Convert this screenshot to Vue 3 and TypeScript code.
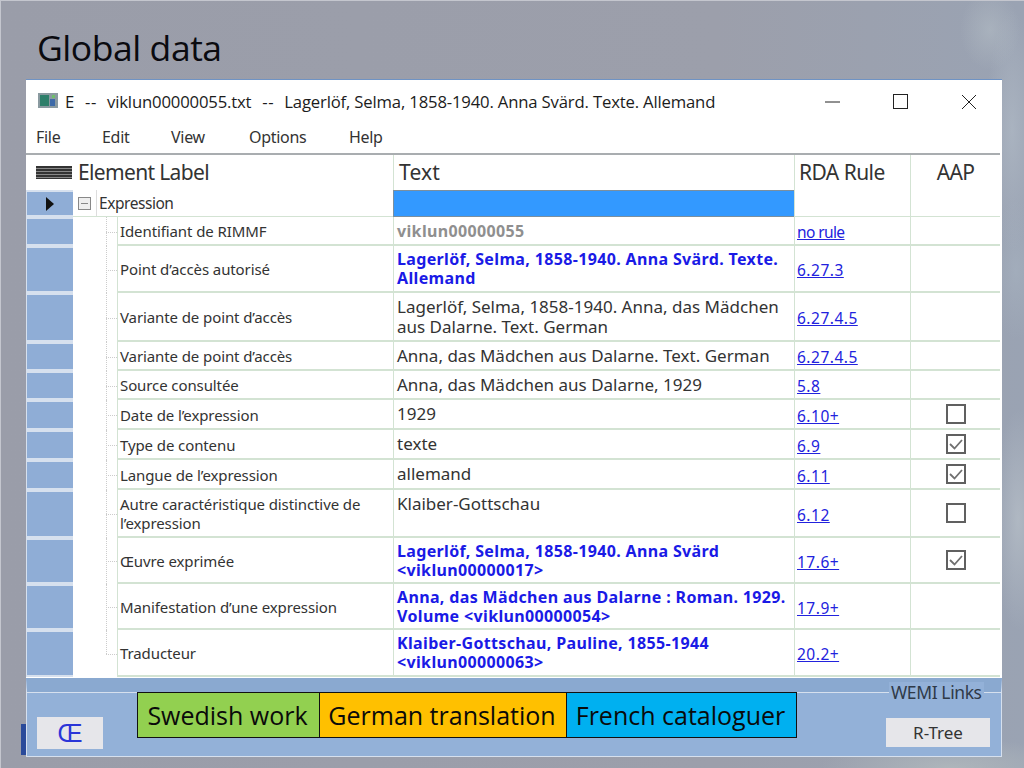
<script setup lang="ts">
interface Row {
  label: string
  text: string[]
  kind: 'plain' | 'bold' | 'id'
  rule: string
  aap: 'none' | 'off' | 'on'
  h: number
}
const rows: Row[] = [
  { label: 'Identifiant de RIMMF', text: ['viklun00000055'], kind: 'id', rule: 'no rule', aap: 'none', h: 29 },
  { label: 'Point d’accès autorisé', text: ['Lagerlöf, Selma, 1858-1940. Anna Svärd. Texte.', 'Allemand'], kind: 'bold', rule: '6.27.3', aap: 'none', h: 47 },
  { label: 'Variante de point d’accès', text: ['Lagerlöf, Selma, 1858-1940. Anna, das Mädchen', 'aus Dalarne. Text. German'], kind: 'plain', rule: '6.27.4.5', aap: 'none', h: 49 },
  { label: 'Variante de point d’accès', text: ['Anna, das Mädchen aus Dalarne. Text. German'], kind: 'plain', rule: '6.27.4.5', aap: 'none', h: 29 },
  { label: 'Source consultée', text: ['Anna, das Mädchen aus Dalarne, 1929'], kind: 'plain', rule: '5.8', aap: 'none', h: 29 },
  { label: 'Date de l’expression', text: ['1929'], kind: 'plain', rule: '6.10+', aap: 'off', h: 30 },
  { label: 'Type de contenu', text: ['texte'], kind: 'plain', rule: '6.9', aap: 'on', h: 30 },
  { label: 'Langue de l’expression', text: ['allemand'], kind: 'plain', rule: '6.11', aap: 'on', h: 30 },
  { label: 'Autre caractéristique distinctive de l’expression', text: ['Klaiber-Gottschau'], kind: 'plain', rule: '6.12', aap: 'off', h: 48 },
  { label: 'Œuvre exprimée', text: ['Lagerlöf, Selma, 1858-1940. Anna Svärd', '<viklun00000017>'], kind: 'bold', rule: '17.6+', aap: 'on', h: 46 },
  { label: 'Manifestation d’une expression', text: ['Anna, das Mädchen aus Dalarne : Roman. 1929.', 'Volume <viklun00000054>'], kind: 'bold', rule: '17.9+', aap: 'none', h: 46 },
  { label: 'Traducteur', text: ['Klaiber-Gottschau, Pauline, 1855-1944', '<viklun00000063>'], kind: 'bold', rule: '20.2+', aap: 'none', h: 47 },
]
const menus = ['File', 'Edit', 'View', 'Options', 'Help']
const legend = [
  { t: 'Swedish work', c: 'green' },
  { t: 'German translation', c: 'amber' },
  { t: 'French cataloguer', c: 'cyan' },
]
</script>

<template>
  <div class="slide">
    <h1 class="title">Global data</h1>
    <div class="window">
      <div class="titlebar">
        <svg class="appicon" width="22" height="16" viewBox="0 0 22 16">
          <rect x="0" y="0" width="20" height="15" fill="#8a9aa0" />
          <rect x="2" y="2" width="9" height="11" fill="#2d7f6a" />
          <rect x="12" y="6" width="5" height="7" fill="#3d6aa8" />
          <rect x="14" y="2" width="3" height="3" fill="#6fbf6a" />
        </svg>
        <span class="wintitle">E<span class="sep">--</span>viklun00000055.txt<span class="sep">--</span>Lagerlöf, Selma, 1858-1940. Anna Svärd. Texte. Allemand</span>
        <div class="controls">
          <svg width="16" height="16" viewBox="0 0 16 16"><path d="M0 8H15" stroke="#222" fill="none" /></svg>
          <svg width="16" height="16" viewBox="0 0 16 16"><rect x="0.5" y="0.5" width="14" height="14" stroke="#222" fill="none" /></svg>
          <svg width="16" height="16" viewBox="0 0 16 16"><path d="M1 1L15 15M15 1L1 15" stroke="#222" fill="none" /></svg>
        </div>
      </div>
      <div class="menubar">
        <span v-for="m in menus" :key="m" class="menu" :class="'m-' + m.toLowerCase()">{{ m }}</span>
      </div>
      <div class="grid">
        <div class="row head">
          <div class="handle headhandle"><span class="lines"></span></div>
          <div class="hcell labelcol">Element Label</div>
          <div class="hcell textcol">Text</div>
          <div class="hcell rulecol">RDA Rule</div>
          <div class="hcell aapcol center">AAP</div>
        </div>
        <div class="row exprow">
          <div class="handle"><span class="arrow"></span></div>
          <div class="expcell">
            <span class="minus"></span>
            <span class="explabel">Expression</span>
          </div>
          <div class="textcol selected"></div>
          <div class="rulecol"></div>
          <div class="aapcol"></div>
        </div>
        <div v-for="(r, i) in rows" :key="i" class="row" :style="{ height: r.h + 'px' }">
          <div class="handle"></div>
          <div class="tree" :class="{ last: i === rows.length - 1 }"><span class="branch"></span></div>
          <div class="labelcell">{{ r.label }}</div>
          <div class="textcol textcell" :class="r.kind">
            <div v-for="(l, j) in r.text" :key="j">{{ l }}</div>
          </div>
          <div class="rulecol rulecell"><span class="link" :class="{ word: r.rule === 'no rule' }">{{ r.rule }}</span></div>
          <div class="aapcol aapcell">
            <svg v-if="r.aap !== 'none'" class="check" width="20" height="20" viewBox="0 0 20 20">
              <rect x="1" y="1" width="18" height="18" fill="#fff" stroke="#606060" stroke-width="2" />
              <path v-if="r.aap === 'on'" d="M4 10L8.5 14.5L16 6" fill="none" stroke="#707070" stroke-width="1.8" />
            </svg>
          </div>
        </div>
      </div>
      <div class="footer">
        <button class="btn oe">Œ</button>
        <div class="legend">
          <span v-for="l in legend" :key="l.t" class="chip" :class="l.c">{{ l.t }}</span>
        </div>
        <div class="wemi">
          <span class="wemilabel">WEMI Links</span>
          <button class="btn rtree">R-Tree</button>
        </div>
      </div>
      <span class="sliver"></span>
    </div>
  </div>
</template>

<style>
html, body { margin: 0; padding: 0; }
</style>

<style scoped>
.slide {
  width: 1024px;
  height: 768px;
  overflow: hidden;
  box-sizing: border-box;
  padding-top: 1px;
  padding-left: 1px;
  box-shadow: inset 1px 1px 0 #c4c6ce;
  background:
    radial-gradient(ellipse 30px 40px at 990px 30px, rgba(190,200,205,.4), transparent),
    radial-gradient(ellipse 26px 120px at 1012px 130px, rgba(185,195,205,.5), transparent),
    radial-gradient(ellipse 24px 70px at 1016px 270px, rgba(170,182,195,.5), transparent),
    radial-gradient(ellipse 24px 110px at 1018px 520px, rgba(190,198,205,.6), transparent),
    radial-gradient(ellipse 130px 30px at 950px 768px, rgba(180,188,190,.75), transparent),
    linear-gradient(90deg, #9a9da9 0%, #9c9fab 70%, #9aa3b3 100%);
  font-family: "Open Sans", "Liberation Sans", sans-serif;
}
.title {
  margin: 0;
  height: 78px;
  box-sizing: border-box;
  padding: 25px 0 0 36px;
  font-size: 35.5px;
  line-height: 42px;
  font-weight: 400;
  color: #0a0a0f;
  font-family: "Open Sans", sans-serif;
  letter-spacing: -0.45px;
}
.window {
  position: relative;
  margin-left: 25px;
  width: 976px;
  height: 678px;
  background: #fff;
  border-top: 1px solid #6f93c4;
  box-sizing: border-box;
  display: flex;
  flex-direction: column;
}
.titlebar {
  height: 44px;
  display: flex;
  align-items: center;
  padding-left: 12px;
  flex: none;
}
.appicon { margin-right: 6px; margin-top: -3px; }
.wintitle {
  font-size: 16.7px;
  color: #1c1c1c;
  font-family: "Open Sans", sans-serif;
  letter-spacing: -0.17px;
  margin-top: -1px;
  margin-left: -1px;
  white-space: nowrap;
}
.sep { margin: 0 10px 0 11px; letter-spacing: 0.6px; }
.controls {
  margin-left: auto;
  margin-right: 25px;
  display: flex;
  gap: 52px;
}
.menubar {
  height: 29px;
  flex: none;
  display: flex;
  align-items: center;
  padding: 0 0 3px 10px;
  box-sizing: border-box;
  font-size: 16px;
  color: #333;
  font-family: "Noto Sans", sans-serif;
  letter-spacing: -0.3px;
}
.menu { width: 66px; }
.m-file { width: 66px; }
.m-edit { width: 69px; }
.m-view { width: 78px; }
.m-options { width: 100px; }
.grid {
  flex: none;
  border-top: 2px solid #a9adb0;
  width: 974px;
}
.row {
  display: flex;
  height: 29px;
  box-sizing: border-box;
}
.head { height: 35px; }
.handle {
  width: 47px;
  flex: none;
  box-sizing: border-box;
  background: #8fadd6;
  border: 2px solid #d6e0ee;
  border-left-width: 1px;
  border-right: 0;
  display: flex;
  align-items: center;
  justify-content: center;
}
.headhandle { background: #fff; border: none; }
.lines {
  width: 36px;
  height: 13px;
  background: repeating-linear-gradient(180deg, #333 0 2px, #888 2px 3px);
  margin-left: 8px;
}
.arrow {
  width: 0;
  height: 0;
  border-left: 8px solid #111;
  border-top: 7px solid transparent;
  border-bottom: 7px solid transparent;
}
.hcell {
  font-family: "Noto Sans", sans-serif;
  font-size: 21px;
  line-height: 34px;
  color: #333;
  letter-spacing: -0.65px;
  box-sizing: border-box;
  padding-left: 5px;
}
.labelcol { width: 320px; flex: none; }
.textcol {
  width: 401px;
  flex: none;
  box-sizing: border-box;
  border-left: 1px solid #d3e3d3;
}
.hcell.textcol { letter-spacing: 0.2px; }
.hcell.rulecol { padding-left: 4px; letter-spacing: -0.55px; }
.rulecol {
  width: 116px;
  flex: none;
  box-sizing: border-box;
  border-left: 1px solid #d3e3d3;
}
.aapcol {
  width: 90px;
  flex: none;
  box-sizing: border-box;
  border-left: 1px solid #d3e3d3;
}
.center { text-align: center; padding-left: 0; }
.exprow { height: 27px; }
.expcell {
  width: 320px;
  flex: none;
  display: flex;
  align-items: center;
  box-sizing: border-box;
  padding-left: 5px;
  border-bottom: 1px solid #d3e3d3;
}
.minus {
  width: 11px;
  height: 11px;
  border: 1px solid #888;
  background: linear-gradient(#888, #888) center / 7px 1px no-repeat, #eee;
  flex: none;
}
.explabel {
  font-family: "Noto Sans", sans-serif;
  font-size: 15.5px;
  color: #333;
  letter-spacing: -0.45px;
  margin-left: 5px;
  border-left: 1px solid #ddd;
  padding-left: 2px;
  line-height: 26px;
  height: 26px;
  margin-top: -1px;
}
.selected { background: #3399ff; border: 1px solid #7b8f9f; border-right: 0; }
.exprow .rulecol, .exprow .aapcol { border-bottom: 1px solid #d3e3d3; }
.tree {
  width: 44px;
  flex: none;
  position: relative;
}
.tree::before {
  content: "";
  position: absolute;
  left: 33px;
  top: 0;
  bottom: 0;
  border-left: 1px dotted #ccc;
}
.tree.last::before { bottom: 50%; }
.branch {
  position: absolute;
  left: 33px;
  right: 0;
  top: 50%;
  border-top: 1px dotted #ccc;
}
.labelcell {
  width: 276px;
  flex: none;
  box-sizing: border-box;
  display: flex;
  align-items: center;
  padding: 2px 2px 0 2px;
  font-family: "Noto Sans", sans-serif;
  font-size: 15px;
  line-height: 19px;
  color: #333;
  letter-spacing: -0.1px;
  border-left: 1px solid #d3e3d3;
  border-bottom: 2px solid #d3e3d3;
}
.textcell {
  padding: 4px 2px 0 3px;
  font-family: "Noto Sans", sans-serif;
  font-size: 17px;
  line-height: 20px;
  color: #333;
  letter-spacing: 0;
  border-bottom: 2px solid #d3e3d3;
  white-space: nowrap;
}
.textcell.bold, .textcell.id {
  font-weight: 700;
  font-size: 16px;
  line-height: 19px;
  letter-spacing: 0.35px;
  color: #1a1ae6;
  padding-top: 4px;
}
.textcell.id { color: #8f8f8f; padding-top: 5px; }
.rulecell {
  padding: 3px 0 0 2px;
  display: flex;
  align-items: center;
  border-bottom: 2px solid #d3e3d3;
}
.link {
  color: #2222dd;
  text-decoration: underline;
  font-family: "Noto Sans", sans-serif;
  font-size: 15.5px;
  letter-spacing: 0.5px;
}
.link.word { letter-spacing: -0.6px; }
.aapcell {
  display: flex;
  align-items: center;
  justify-content: center;
  border-bottom: 2px solid #d3e3d3;
}
.footer {
  flex: 1;
  background: #93b1d8;
  position: relative;
  border-top: 14px solid #8aa9d0;
  box-shadow: inset 0 1px 0 #d6e0ee;
  display: flex;
  align-items: flex-start;
  border-left: 1px solid #d6e0ee;
  border-right: 1px solid #d6e0ee;
  border-bottom: 1px solid #d6e0ee;
  margin-top: 1px;
}
.btn {
  border: none;
  background: #e6e6ea;
  font-family: "Noto Sans", sans-serif;
  padding: 0;
  color: #333;
}
.oe {
  width: 66px;
  height: 32px;
  margin: 25px 0 0 10px;
  font-size: 25px;
  line-height: 32px;
  color: #2a35d8;
  font-family: "Liberation Sans", sans-serif;
}
.legend {
  display: flex;
  margin: 0 0 0 34px;
  border: 1px solid #111;
  height: 46px;
  box-sizing: border-box;
  width: 660px;
}
.chip {
  display: flex;
  align-items: center;
  justify-content: center;
  font-family: "Open Sans", sans-serif;
  font-size: 25px;
  color: #0a0a0a;
  letter-spacing: 0;
  white-space: nowrap;
}
.green { width: 182px; background: #92d050; border-right: 1px solid #111; box-sizing: border-box; padding-right: 2px; }
.amber { width: 247px; background: #ffc000; border-right: 1px solid #111; box-sizing: border-box; padding-right: 2px; }
.cyan { flex: 1; background: #00b0f0; padding-right: 2px; }
.wemi {
  position: absolute;
  right: 0;
  top: 0;
  width: 114px;
  height: 64px;
}
.wemilabel {
  position: absolute;
  top: -10px;
  left: 2px;
  padding: 0 2px;
  background: #93b1d8;
  font-family: "Noto Sans", sans-serif;
  font-size: 17.5px;
  line-height: 20px;
  color: #2f3a48;
  letter-spacing: -0.4px;
  white-space: nowrap;
}
.rtree {
  position: absolute;
  left: -1px;
  top: 26px;
  width: 104px;
  height: 29px;
  font-size: 17px;
  line-height: 27px;
}
.sliver {
  position: absolute;
  left: -5px;
  top: 644px;
  width: 5px;
  height: 31px;
  background: #2a4a9a;
}
</style>
